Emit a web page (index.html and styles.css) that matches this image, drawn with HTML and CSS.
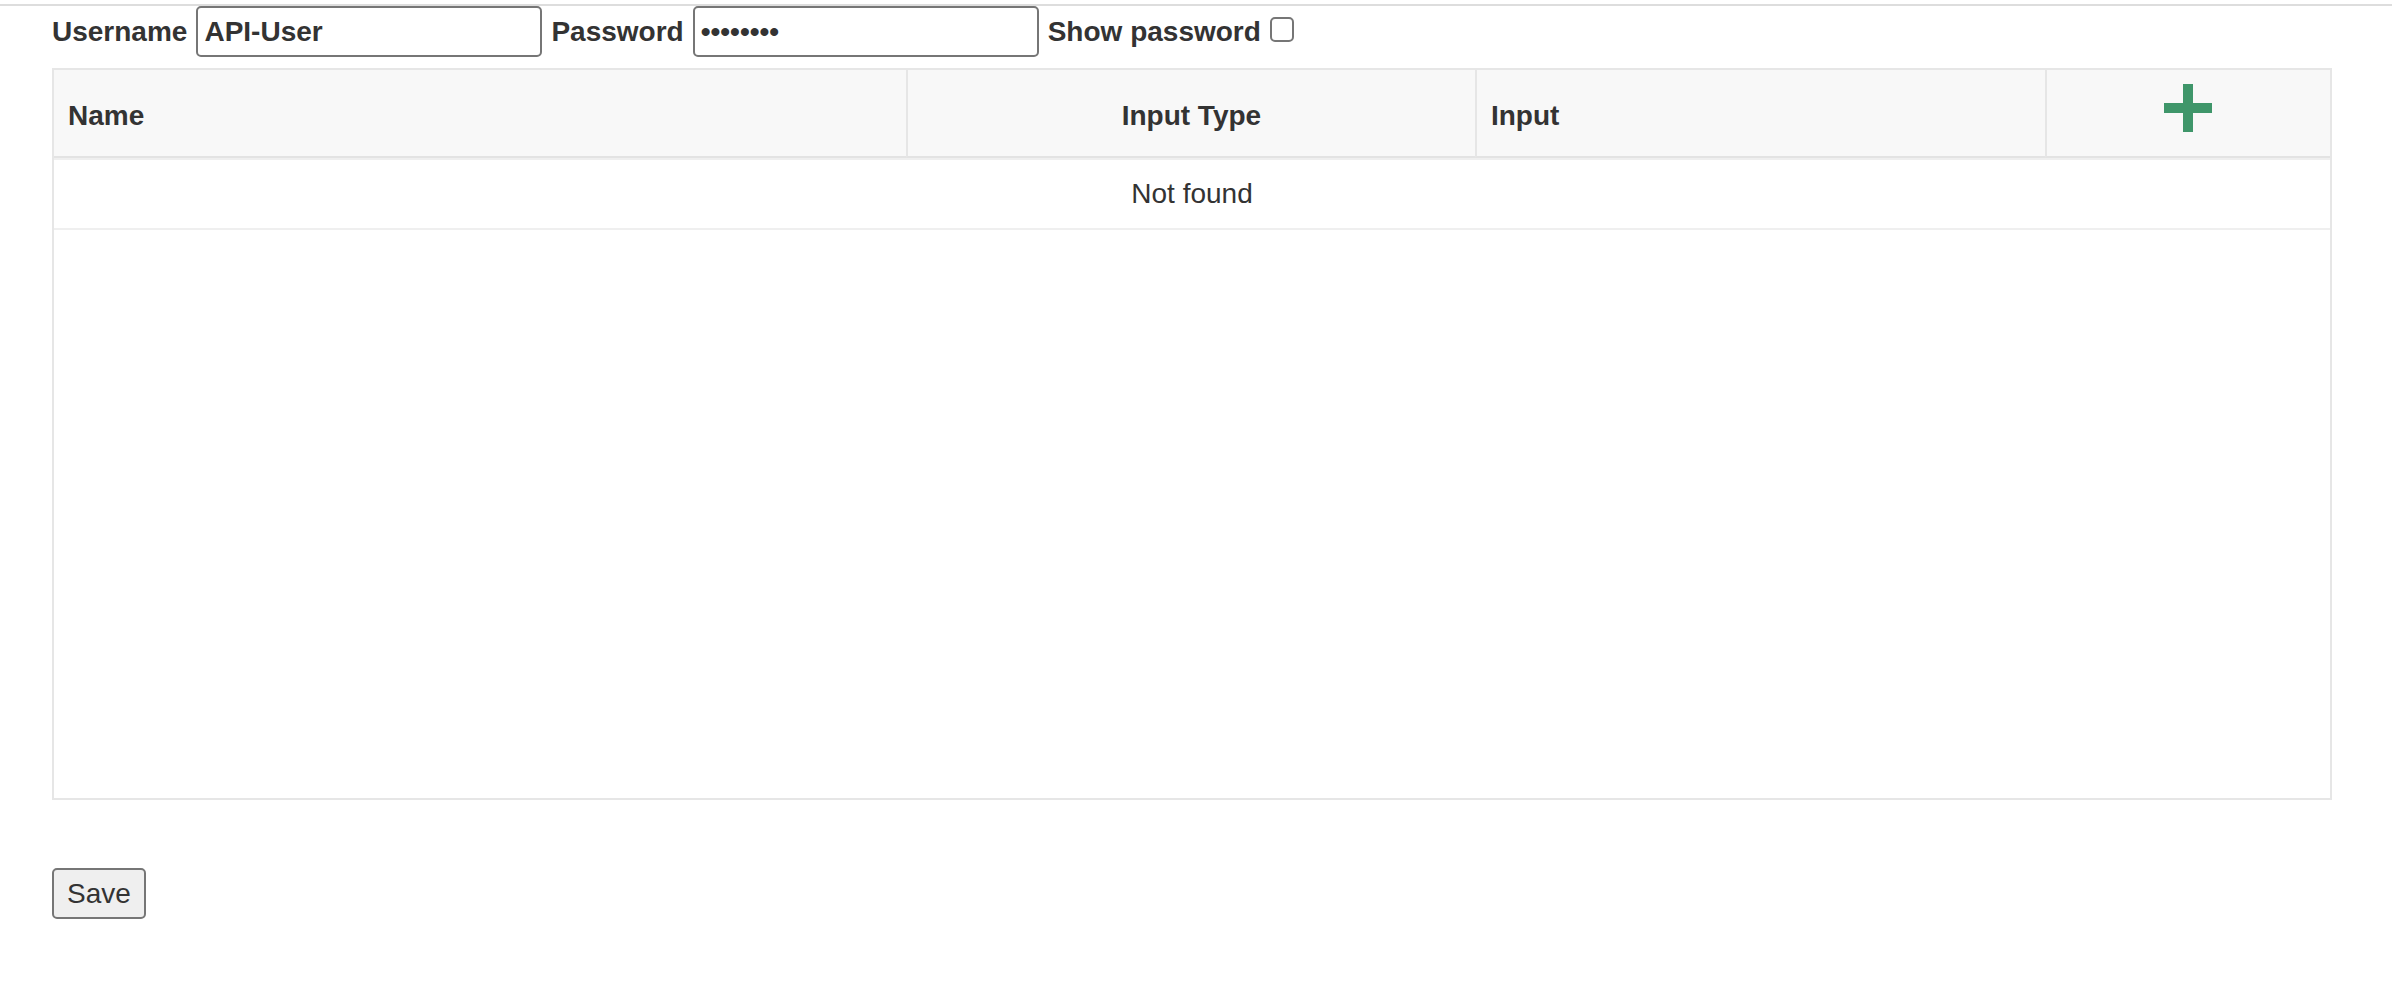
FILE: index.html
```html
<!DOCTYPE html>
<html lang="en">
<head>
<meta charset="utf-8">
<title>API inputs</title>
<link rel="stylesheet" href="styles.css">
</head>
<body>
<div class="topline"></div>
<main class="page">
  <form class="creds">
    <label class="lbl" for="u">Username</label>
    <input id="u" class="field" type="text" value="API-User">
    <label class="lbl" for="p">Password</label>
    <input id="p" class="field" type="password" value="password">
    <label class="lbl" for="s">Show password</label>
    <input id="s" class="check" type="checkbox">
  </form>
  <div class="grid">
    <table class="tbl">
      <colgroup>
        <col class="w-name">
        <col class="w-type">
        <col class="w-input">
        <col class="w-add">
      </colgroup>
      <thead>
        <tr>
          <th class="c-name">Name</th>
          <th class="c-type">Input Type</th>
          <th class="c-input">Input</th>
          <th class="c-add">
            <svg class="plus" width="48" height="48" viewBox="0 0 48 48" aria-label="Add">
              <rect x="19" y="0" width="10" height="48" fill="#3f966a"/>
              <rect x="0" y="19" width="48" height="10" fill="#3f966a"/>
            </svg>
          </th>
        </tr>
      </thead>
      <tbody>
        <tr><td colspan="4" class="empty">Not found</td></tr>
      </tbody>
    </table>
  </div>
  <button class="save" type="button">Save</button>
</main>
</body>
</html>
```

FILE: styles.css
```css
html, body {
  margin: 0;
  padding: 0;
  background: #fff;
}
body {
  font-family: "Liberation Sans", Arial, Helvetica, sans-serif;
  color: #333;
}
.topline {
  margin-top: 4px;
  height: 2px;
  background: #dddddd;
}
.page {
  padding: 0 60px 0 52px;
}
.creds {
  display: flex;
  align-items: center;
  gap: 9px;
  height: 51px;
  margin: 0;
}
.lbl {
  font-weight: 700;
  font-size: 28px;
  line-height: 32px;
  color: #333;
}
.field {
  box-sizing: border-box;
  width: 346px;
  height: 51px;
  margin: 0;
  padding: 0 6px;
  border: 2px solid #767676;
  border-radius: 5px;
  background: #fff;
  font-family: "Liberation Sans", Arial, sans-serif;
  font-weight: 700;
  font-size: 28px;
  color: #333;
  outline: none;
}
.check {
  -webkit-appearance: none;
  appearance: none;
  box-sizing: border-box;
  width: 24px;
  height: 25px;
  margin: 0 0 4px 0;
  border: 2px solid #767676;
  border-radius: 5px;
  background: #fff;
}
.grid {
  box-sizing: border-box;
  margin-top: 11px;
  height: 732px;
  border: 2px solid #e6e6e6;
}
.tbl {
  width: 100%;
  table-layout: fixed;
  border-collapse: separate;
  border-spacing: 0;
  font-size: 28px;
  color: #333;
}
.w-name { width: 37.43%; }
.w-type { width: 25%; }
.w-input { width: 25.04%; }
.w-add { width: 12.53%; }
.tbl th {
  background: #f8f8f8;
  font-weight: 700;
  text-align: left;
  padding: 26px 14px 20px;
  line-height: 40px;
  border-bottom: 2px solid #e3e3e3;
  border-left: 2px solid #e6e6e6;
  vertical-align: middle;
}
.tbl th.c-name {
  border-left: none;
}
.tbl th.c-type,
.tbl th.c-add {
  text-align: center;
}
.tbl th.c-add {
  padding-top: 14px;
  padding-bottom: 14px;
  line-height: 0;
}
.plus {
  display: block;
  margin: 0 auto 10px;
}
.tbl td.empty {
  text-align: center;
  padding: 14px 16px;
  line-height: 40px;
  border-top: 2px solid #efefef;
  border-bottom: 2px solid #efefef;
}
.save {
  display: block;
  box-sizing: border-box;
  margin-top: 68px;
  height: 51px;
  padding: 0 13px;
  border: 2px solid #767676;
  border-radius: 5px;
  background: #efefef;
  font-family: "Liberation Sans", Arial, sans-serif;
  font-size: 28px;
  color: #333;
}
```
